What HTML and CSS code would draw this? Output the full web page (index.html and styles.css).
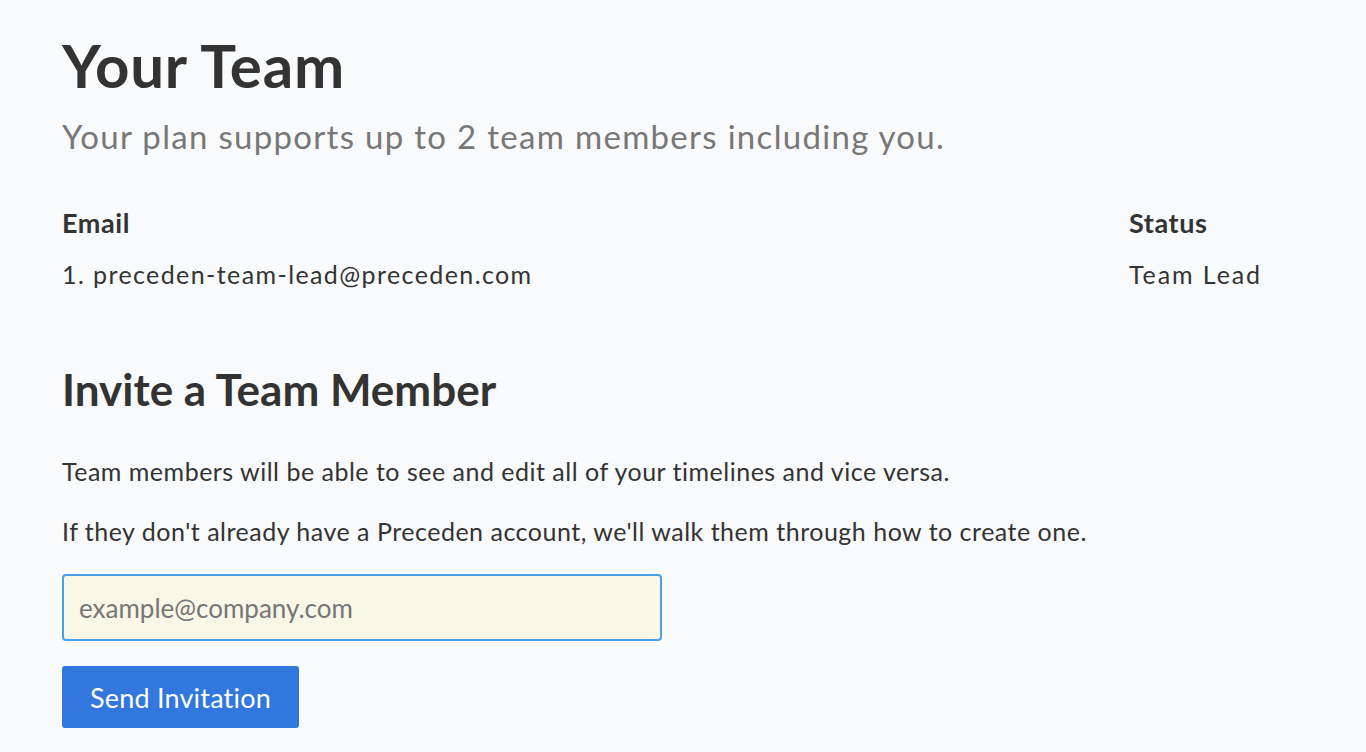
FILE: index.html
```html
<!DOCTYPE html>
<html lang="en">
<head>
<meta charset="utf-8">
<title>Your Team</title>
<link rel="stylesheet" href="styles.css">
</head>
<body>
<main class="page">
  <h1 class="title">Your Team</h1>
  <p class="subtitle">Your plan supports up to 2 team members including you.</p>

  <div class="team-table">
    <div class="th">Email</div>
    <div class="th th-status">Status</div>
    <div class="td">1. preceden-team-lead@preceden.com</div>
    <div class="td td-status">Team Lead</div>
  </div>

  <h2 class="section-title">Invite a Team Member</h2>
  <p class="note note-first">Team members will be able to see and edit all of your timelines and vice versa.</p>
  <p class="note note-second">If they don't already have a Preceden account, we'll walk them through how to create one.</p>

  <form class="invite-form">
    <input class="email-input" type="email" placeholder="example@company.com">
    <button class="send-btn" type="button">Send Invitation</button>
  </form>
</main>
</body>
</html>
```

FILE: styles.css
```css
html, body {
  margin: 0;
  padding: 0;
  background: #f9fafc;
}

body {
  font-family: "Lato", "Open Sans", sans-serif;
  color: #333333;
}

.page {
  padding: 32px 62px 0 62px;
  display: flex;
  flex-direction: column;
  align-items: stretch;
}

.title {
  margin: 0;
  font-size: 60px;
  line-height: 66px;
  font-weight: 700;
  letter-spacing: 0.8px;
  color: #333333;
}

.subtitle {
  margin: 18px 0 0 0;
  font-size: 33px;
  line-height: 40px;
  letter-spacing: 1.3px;
  color: #777777;
}

.team-table {
  margin-top: 51px;
  display: grid;
  grid-template-columns: 1fr 175px;
  row-gap: 19px;
}

.th {
  font-size: 27px;
  line-height: 32px;
  font-weight: 700;
  letter-spacing: 0.6px;
}

.td {
  font-size: 25px;
  line-height: 32px;
  letter-spacing: 1.4px;
}

.td-status {
  letter-spacing: 1.9px;
}

.section-title {
  margin: 73px 0 0 0;
  font-size: 44px;
  line-height: 52px;
  font-weight: 700;
}

.note {
  margin: 0;
  font-size: 25px;
  line-height: 32px;
  letter-spacing: 0.5px;
}

.note-first {
  margin-top: 40px;
}

.note-second {
  margin-top: 28px;
}

.invite-form {
  margin-top: 27px;
  display: flex;
  flex-direction: column;
  align-items: flex-start;
  gap: 25px;
}

.email-input {
  box-sizing: border-box;
  width: 600px;
  height: 67px;
  padding: 0 15px;
  border: 2px solid #4a9fe6;
  border-radius: 4px;
  background: #f9f7e6;
  font-family: inherit;
  font-size: 26px;
  color: #333333;
  outline: none;
}

.email-input::placeholder {
  color: #767676;
}

.send-btn {
  box-sizing: border-box;
  height: 62px;
  padding: 0 28px;
  border: none;
  border-radius: 3px;
  background: #3177de;
  color: #ffffff;
  font-family: inherit;
  font-size: 27px;
  letter-spacing: 0.2px;
  cursor: pointer;
}
```
